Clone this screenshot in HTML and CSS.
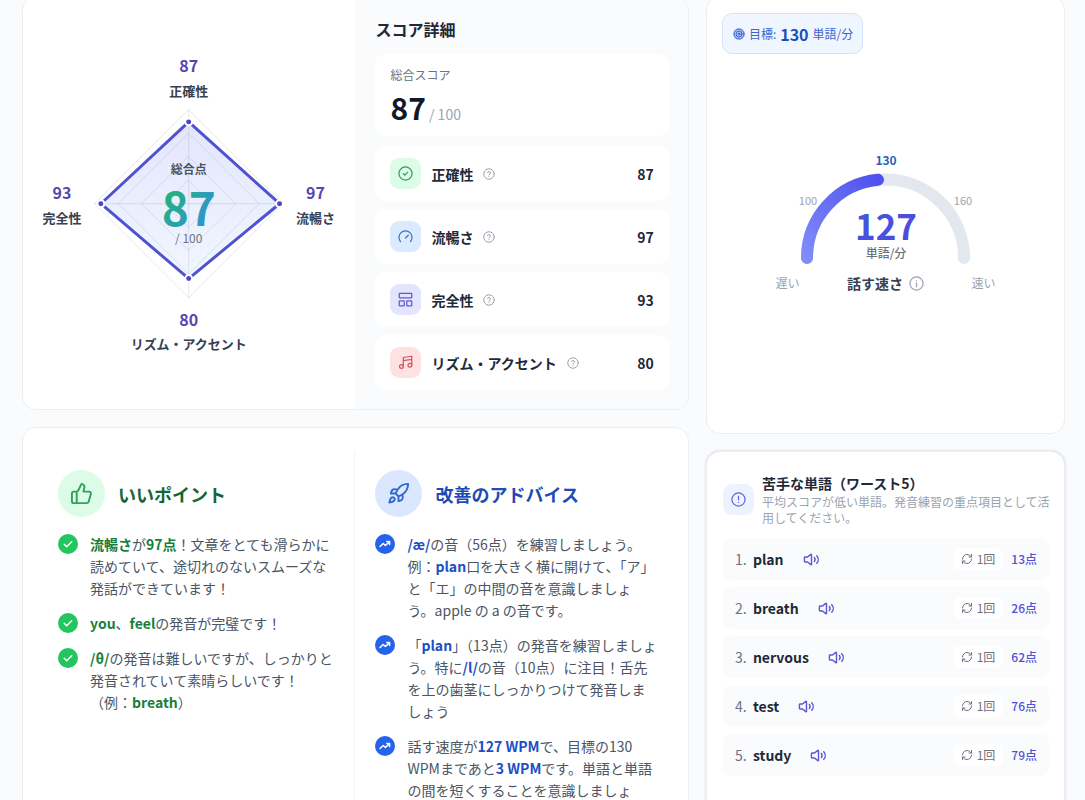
FILE: index.html
```html
<!DOCTYPE html>
<html lang="ja">

<head>
  <meta charset="UTF-8">
  <meta name="viewport" content="width=device-width, initial-scale=1.0">
  <title>スコア詳細</title>
  <link rel="stylesheet" href="styles.css">
</head>

<body>
  <!-- shared icons -->
  <svg class="sprite" aria-hidden="true">
    <symbol id="help" viewBox="0 0 24 24">
      <circle cx="12" cy="12" r="10.5" />
      <path d="M9 9.2a3 3 0 0 1 5.9.9c0 2-2.9 2.4-2.9 4M12 17.2v.1" />
    </symbol>
    <symbol id="check" viewBox="0 0 20 20">
      <path d="m6.2 10.3 2.5 2.4 5-5" />
    </symbol>
    <symbol id="trend" viewBox="0 0 20 20">
      <path d="m5 12.5 3.2-3 2.2 2 3.9-3.6M11.8 7.6h2.8v2.8" />
    </symbol>
    <symbol id="volume" viewBox="0 0 24 24">
      <path d="M11 4.7 6.4 8.5H3a1 1 0 0 0-1 1v5a1 1 0 0 0 1 1h3.4l4.6 3.8a.6.6 0 0 0 1-.5V5.2a.6.6 0 0 0-1-.5zM16 9a5 5 0 0 1 0 6M19.4 6.600a8 8 0 0 1 0 10.800" />
    </symbol>
    <symbol id="refresh" viewBox="0 0 24 24">
      <path d="M3 12a9 9 0 0 1 9-9 9.8 9.8 0 0 1 6.7 2.7L21 8M21 3v5h-5M21 12a9 9 0 0 1-9 9 9.8 9.8 0 0 1-6.7-2.7L3 16M3 21v-5h5" />
    </symbol>
  </svg>

  <div class="page">
    <main class="col">
      <section class="card score-card">
        <div class="radar">
          <svg viewBox="0 0 333 300" role="img" aria-label="スコアチャート">
            <defs>
              <linearGradient id="totalFill" x1="0" y1="0" x2="1" y2="1">
                <stop offset="0.15" stop-color="#22b573" />
                <stop offset="0.85" stop-color="#3290dc" />
              </linearGradient>
              <linearGradient id="areaFill" x1="0" y1="0" x2="0" y2="1">
                <stop offset="0" stop-color="#6366f1" stop-opacity="0.17" />
                <stop offset="1" stop-color="#3b82f6" stop-opacity="0.07" />
              </linearGradient>
            </defs>
            <path class="area" d="M166 72 257 154 166 229 78 154z" />
            <g class="grid">
              <path d="M166 60l94 94-94 94-94-94z" />
              <path d="M166 83.500l70.500 70.500-70.500 70.500-70.500-70.500z" />
              <path d="M166 107l47 47-47 47-47-47z" />
              <path d="M166 130.500l23.500 23.500-23.500 23.500-23.500-23.500z" />
              <path d="M166 60v188M72 154h188" />
            </g>
            <path class="outline" d="M166 72 257 154 166 229 78 154z" />
            <g class="dots">
              <circle cx="166" cy="72" r="3.500" />
              <circle cx="257" cy="154" r="3.500" />
              <circle cx="166" cy="229" r="3.500" />
              <circle cx="78" cy="154" r="3.500" />
            </g>
            <text class="value" x="166" y="22">87</text>
            <text class="name" x="166" y="46">正確性</text>
            <text class="value" x="293" y="149">97</text>
            <text class="name" x="293" y="173">流暢さ</text>
            <text class="value" x="39" y="149">93</text>
            <text class="name" x="39" y="173">完全性</text>
            <text class="value" x="166" y="276">80</text>
            <text class="name" x="166" y="300">リズム・アクセント</text>
            <text class="total-label" x="166" y="124">総合点</text>
            <text class="total" x="166" y="176">87</text>
            <text class="total-max" x="166" y="193">/ 100</text>
          </svg>
        </div>

        <div class="detail">
          <h2>スコア詳細</h2>
          <div class="overall">
            <p>総合スコア</p>
            <div><strong>87</strong> <span>/ 100</span></div>
          </div>
          <ul class="metrics">
            <li>
              <span class="tile green">
                <svg viewBox="0 0 24 24"><circle cx="12" cy="12" r="10.500" /><path d="m8.500 12.300 2.400 2.300 4.600-4.800" /></svg>
              </span>
              <b>正確性</b>
              <button type="button" aria-label="正確性について"><svg><use href="#help" /></svg></button>
              <strong>87</strong>
            </li>
            <li>
              <span class="tile blue">
                <svg viewBox="0 0 24 24"><path d="m12 14.500 4.500-4.500M3.800 20a10.500 10.500 0 1 1 16.400 0" /></svg>
              </span>
              <b>流暢さ</b>
              <button type="button" aria-label="流暢さについて"><svg><use href="#help" /></svg></button>
              <strong>97</strong>
            </li>
            <li>
              <span class="tile indigo">
                <svg viewBox="0 0 24 24"><rect x="2" y="2" width="20" height="7.500" rx="1" /><rect x="2" y="14" width="8" height="8" rx="1" /><rect x="14" y="14" width="8" height="8" rx="1" /></svg>
              </span>
              <b>完全性</b>
              <button type="button" aria-label="完全性について"><svg><use href="#help" /></svg></button>
              <strong>93</strong>
            </li>
            <li>
              <span class="tile red">
                <svg viewBox="0 0 24 24"><path d="M8.500 18.500V4L22 2v14.500M8.500 9 22 7" /><circle cx="5.500" cy="18.500" r="3" /><circle cx="19" cy="16.500" r="3" /></svg>
              </span>
              <b>リズム・アクセント</b>
              <button type="button" aria-label="リズム・アクセントについて"><svg><use href="#help" /></svg></button>
              <strong>80</strong>
            </li>
          </ul>
        </div>
      </section>

      <section class="card feedback">
        <div class="good">
          <header>
            <span class="round">
              <svg viewBox="0 0 24 24"><path d="M7 10v12M15 5.880 14 10h5.830a2 2 0 0 1 1.920 2.560l-2.330 8A2 2 0 0 1 17.500 22H4a2 2 0 0 1-2-2v-8a2 2 0 0 1 2-2h2.760a2 2 0 0 0 1.790-1.110L12 2a3.130 3.130 0 0 1 3 3.880z" /></svg>
            </span>
            <h2>いいポイント</h2>
          </header>
          <ul>
            <li>
              <svg class="bullet"><use href="#check" /></svg>
              <p><b>流暢さ</b>が<b>97点</b>！文章をとても滑らかに読めていて、途切れのないスムーズな発話ができています！</p>
            </li>
            <li>
              <svg class="bullet"><use href="#check" /></svg>
              <p><b>you</b>、<b>feel</b>の発音が完璧です！</p>
            </li>
            <li>
              <svg class="bullet"><use href="#check" /></svg>
              <p><b>/θ/</b>の発音は難しいですが、しっかりと発音されていて素晴らしいです！<br>（例：<b>breath</b>）</p>
            </li>
          </ul>
        </div>
        <div class="advice">
          <header>
            <span class="round">
              <svg viewBox="0 0 24 24"><path d="M4.500 16.500c-1.500 1.260-2 5-2 5s3.740-.5 5-2c.71-.84.7-2.130-.09-2.910a2.180 2.180 0 0 0-2.910-.09zM12 15l-3-3a22 22 0 0 1 2-3.950A12.880 12.880 0 0 1 22 2c0 2.720-.78 7.500-6 11a22.350 22.350 0 0 1-4 2zM9 12H4s.55-3.030 2-4c1.620-1.080 5 0 5 0M12 15v5s3.030-.55 4-2c1.080-1.620 0-5 0-5" /></svg>
            </span>
            <h2>改善のアドバイス</h2>
          </header>
          <ul>
            <li>
              <svg class="bullet"><use href="#trend" /></svg>
              <p><b>/æ/</b>の音（56点）を練習しましょう。<br>例：<b>plan</b>口を大きく横に開けて、「ア」と「エ」の中間の音を意識しましょ<br>う。apple の a の音です。</p>
            </li>
            <li>
              <svg class="bullet"><use href="#trend" /></svg>
              <p>「<b>plan</b>」（13点）の発音を練習しましょう。特に<b>/l/</b>の音（10点）に注目！舌先を上の歯茎にしっかりつけて発音しましょう</p>
            </li>
            <li>
              <svg class="bullet"><use href="#trend" /></svg>
              <p>話す速度が<b>127 WPM</b>で、目標の130 WPMまであと<b>3 WPM</b>です。単語と単語の間を短くすることを意識しましょ<br>う。</p>
            </li>
          </ul>
        </div>
      </section>
    </main>

    <aside class="col">
      <section class="card speed">
        <div class="goal">
          <svg viewBox="0 0 24 24"><circle cx="12" cy="12" r="10" /><circle cx="12" cy="12" r="6" /><circle cx="12" cy="12" r="2" /></svg>
          <span>目標:</span>
          <strong>130</strong>
          <span>単語/分</span>
        </div>
        <div class="gauge">
          <svg viewBox="0 0 220 124" role="img" aria-label="話す速さ 127 単語/分">
            <defs>
              <linearGradient id="gaugeFill" x1="0" y1="1" x2="1" y2="0">
                <stop offset="0" stop-color="#818cf8" />
                <stop offset="1" stop-color="#4f52ee" />
              </linearGradient>
              <linearGradient id="speedFill" x1="0" y1="0" x2="1" y2="1">
                <stop offset="0" stop-color="#3f5bd9" />
                <stop offset="1" stop-color="#5246e0" />
              </linearGradient>
            </defs>
            <path class="track" d="M32 109a78.500 78.500 0 0 1 157 0" />
            <path class="fill" d="M32 109A78.500 78.500 0 0 1 103 30.800" />
            <text class="target" x="111" y="16">130</text>
            <text class="tick" x="33" y="56">100</text>
            <text class="tick" x="188" y="56">160</text>
            <text class="speed-value" x="111" y="91">127</text>
            <text class="unit" x="111" y="109">単語/分</text>
          </svg>
          <div class="scale">
            <span>遅い</span>
            <b>話す速さ
              <button type="button" aria-label="話す速さについて">
                <svg viewBox="0 0 24 24"><circle cx="12" cy="12" r="10.500" /><path d="M12 11v6M12 7.200v.1" /></svg>
              </button>
            </b>
            <span>速い</span>
          </div>
        </div>
      </section>

      <section class="card weak">
        <header>
          <span class="tile">
            <svg viewBox="0 0 24 24"><circle cx="12" cy="12" r="10.500" /><path d="M12 7v5.500M12 16.500v.1" /></svg>
          </span>
          <div>
            <h2>苦手な単語（ワースト5）</h2>
            <p>平均スコアが低い単語。発音練習の重点項目として活用してください。</p>
          </div>
        </header>
        <ol>
          <li>
            <i>1.</i><b>plan</b>
            <button type="button" aria-label="planを再生"><svg><use href="#volume" /></svg></button>
            <span class="count"><svg><use href="#refresh" /></svg>1回</span>
            <span class="point">13点</span>
          </li>
          <li>
            <i>2.</i><b>breath</b>
            <button type="button" aria-label="breathを再生"><svg><use href="#volume" /></svg></button>
            <span class="count"><svg><use href="#refresh" /></svg>1回</span>
            <span class="point">26点</span>
          </li>
          <li>
            <i>3.</i><b>nervous</b>
            <button type="button" aria-label="nervousを再生"><svg><use href="#volume" /></svg></button>
            <span class="count"><svg><use href="#refresh" /></svg>1回</span>
            <span class="point">62点</span>
          </li>
          <li>
            <i>4.</i><b>test</b>
            <button type="button" aria-label="testを再生"><svg><use href="#volume" /></svg></button>
            <span class="count"><svg><use href="#refresh" /></svg>1回</span>
            <span class="point">76点</span>
          </li>
          <li>
            <i>5.</i><b>study</b>
            <button type="button" aria-label="studyを再生"><svg><use href="#volume" /></svg></button>
            <span class="count"><svg><use href="#refresh" /></svg>1回</span>
            <span class="point">79点</span>
          </li>
        </ol>
      </section>
    </aside>
  </div>
</body>

</html>
```
FILE: styles.css
```css
* {
  box-sizing: border-box;
}

body {
  margin: 0;
  height: 100vh;
  overflow: hidden;
  background: #f9fbfd;
  color: #1f2937;
  font-family: "Noto Sans CJK JP", sans-serif;
  font-size: 14px;
  line-height: 22px;
}

h2,
p,
ul,
ol {
  margin: 0;
  padding: 0;
  list-style: none;
}

svg {
  display: block;
  flex: none;
  fill: none;
  stroke: currentColor;
  stroke-width: 2;
  stroke-linecap: round;
  stroke-linejoin: round;
}

button {
  display: flex;
  padding: 0;
  border: 0;
  background: none;
  color: #9ca3af;
  cursor: pointer;
}

.sprite {
  display: none;
}

.page {
  display: grid;
  grid-template-columns: 13fr 7fr;
  gap: 17px;
  margin-top: -4px;
  padding: 0 20px 24px 22px;
}

.col {
  display: flex;
  flex-direction: column;
  gap: 17px;
  min-width: 0;
}

.card {
  background: #fff;
  border: 1px solid #ebeff4;
  border-radius: 14px;
}

.col .card:last-child {
  flex: 1;
}

/* score */
.score-card {
  display: grid;
  grid-template-columns: 1fr 1fr;
  overflow: hidden;
}

.radar {
  padding-top: 53px;
}

.radar svg {
  width: 100%;
  overflow: visible;
}

svg text {
  stroke: none;
  text-anchor: middle;
}

.area {
  fill: url(#areaFill);
  stroke: none;
}

.grid {
  stroke: #64748b;
  stroke-opacity: 0.16;
  stroke-width: 1;
}

.outline {
  stroke: #4f53d1;
  stroke-width: 3;
}

.dots {
  fill: #4f46c5;
  stroke: #fff;
  stroke-width: 2;
}

.value {
  fill: #5546b4;
  font-size: 16px;
  font-weight: 700;
}

.name {
  fill: #374151;
  font-size: 13px;
  font-weight: 700;
}

.total-label,
.total-max {
  fill: #4b5563;
  font-size: 12px;
  font-weight: 700;
}

.total-max {
  fill: #6b7280;
  font-weight: 400;
}

.total {
  fill: url(#totalFill);
  font-size: 46px;
  font-weight: 700;
}

.detail {
  padding: 21px 19px 19px 20px;
  background: #f9fbfc;
}

.detail h2 {
  margin-bottom: 14px;
  font-size: 16px;
}

.overall,
.metrics li {
  background: #fff;
  border-radius: 10px;
}

.overall {
  height: 82px;
  margin-bottom: 10px;
  padding: 10px 15px;
}

.overall p {
  color: #6b7280;
  font-size: 12px;
}

.overall div {
  line-height: 42px;
}

.overall strong {
  color: #111827;
  font-size: 30px;
}

.overall span {
  color: #9ca3af;
}

.metrics {
  display: grid;
  gap: 8px;
}

.metrics li {
  display: flex;
  align-items: center;
  gap: 10px;
  height: 55px;
  padding: 0 15px;
}

.metrics strong {
  margin-left: auto;
}

.metrics button svg {
  width: 12px;
  height: 12px;
}

.tile {
  display: flex;
  flex: none;
  align-items: center;
  justify-content: center;
  width: 31px;
  height: 31px;
  border-radius: 9px;
}

.tile svg {
  width: 15px;
  height: 15px;
}

.green {
  background: #dcfce7;
  color: #2f9e5b;
}

.blue {
  background: #dbeafe;
  color: #3c6fc9;
}

.indigo {
  background: #e3e4fd;
  color: #6057cf;
}

.red {
  background: #fee2e2;
  color: #d95363;
}

/* feedback */
.feedback {
  display: grid;
  grid-template-columns: 1fr 1fr;
  padding: 23px 0;
}

.good,
.advice {
  padding-top: 19px;
}

.good {
  padding-left: 35px;
  padding-right: 18px;
  border-right: 1px solid #f1f4f8;
}

.advice {
  padding-left: 20px;
  padding-right: 29px;
}

.feedback header {
  display: flex;
  align-items: center;
  gap: 13px;
  margin-bottom: 16px;
}

.feedback h2 {
  font-size: 18px;
}

.round {
  display: flex;
  align-items: center;
  justify-content: center;
  width: 47px;
  height: 47px;
  border-radius: 50%;
}

.round svg {
  width: 23px;
  height: 23px;
}

.good .round {
  background: #dcfce7;
  color: #2fa35c;
}

.good h2 {
  color: #166534;
}

.advice .round {
  background: #dbe7fe;
  color: #2f66d0;
}

.advice h2 {
  color: #1e4bb8;
}

.feedback ul {
  display: grid;
  gap: 13px;
}

.feedback li {
  display: flex;
  gap: 12px;
  color: #4b5563;
}

.bullet {
  width: 20px;
  height: 20px;
  margin-top: 1px;
  border-radius: 50%;
  color: #fff;
  stroke-width: 1.5;
}

.good .bullet {
  background: #22c55e;
}

.advice .bullet {
  background: #2563eb;
}

.good b {
  color: #15803d;
}

.advice b {
  color: #1d4fc4;
}

/* speed */
.speed {
  min-height: 438px;
  padding: 16px 15px;
}

.goal {
  display: inline-flex;
  align-items: center;
  gap: 4px;
  height: 41px;
  padding: 0 9px 0 10px;
  background: #eff6ff;
  border: 1px solid #d3e3f8;
  border-radius: 10px;
  color: #3f62cf;
  font-size: 12px;
}

.goal svg {
  width: 12px;
  height: 12px;
  background: #b9c8f3;
  border-radius: 50%;
}

.goal strong {
  color: #1d4fb8;
  font-size: 16px;
}

.gauge {
  width: 220px;
  margin: 95px auto 0;
}

.track {
  stroke: #e2e8ee;
  stroke-width: 12;
}

.fill {
  stroke: url(#gaugeFill);
  stroke-width: 12;
}

.target {
  fill: #2563b8;
  font-size: 12px;
  font-weight: 700;
}

.tick {
  fill: #9ca3af;
  font-size: 11px;
}

.speed-value {
  fill: url(#speedFill);
  font-size: 35px;
  font-weight: 700;
}

.unit {
  fill: #6b7280;
  font-size: 12px;
  font-weight: 500;
}

.scale {
  display: flex;
  align-items: center;
  justify-content: space-between;
  margin-top: -1px;
  color: #9ca3af;
  font-size: 12px;
}

.scale b {
  display: flex;
  align-items: center;
  gap: 6px;
  color: #374151;
  font-size: 14px;
}

.scale button svg {
  width: 15px;
  height: 15px;
}

/* weak words */
.weak {
  padding: 20px 15px 24px 16px;
  box-shadow: 0 0 3px #0f172a2e;
}

.weak header {
  display: flex;
  align-items: center;
  gap: 8px;
  margin-bottom: 12px;
}

.weak header .tile {
  background: #eef2ff;
  color: #6366e0;
}

.weak h2 {
  font-size: 14px;
}

.weak header p {
  margin-right: -3px;
  color: #9ca3af;
  font-size: 12px;
  line-height: 16px;
}

.weak ol {
  display: grid;
  gap: 7px;
}

.weak li {
  display: flex;
  align-items: center;
  height: 42px;
  padding: 0 12px;
  background: #fafbfc;
  border-radius: 8px;
}

.weak i {
  width: 18px;
  color: #6b7280;
  font-style: normal;
}

.weak li button {
  margin-left: 19px;
  color: #5b56d8;
}

.weak li button svg {
  width: 17px;
  height: 17px;
}

.count {
  display: flex;
  align-items: center;
  gap: 4px;
  margin-left: auto;
  padding: 0 8px;
  background: #fff;
  border-radius: 6px;
  color: #6b7280;
  font-size: 12px;
}

.count svg {
  width: 12px;
  height: 12px;
}

.point {
  margin-left: 8px;
  color: #5450d6;
  font-size: 12px;
  font-weight: 500;
}
```
